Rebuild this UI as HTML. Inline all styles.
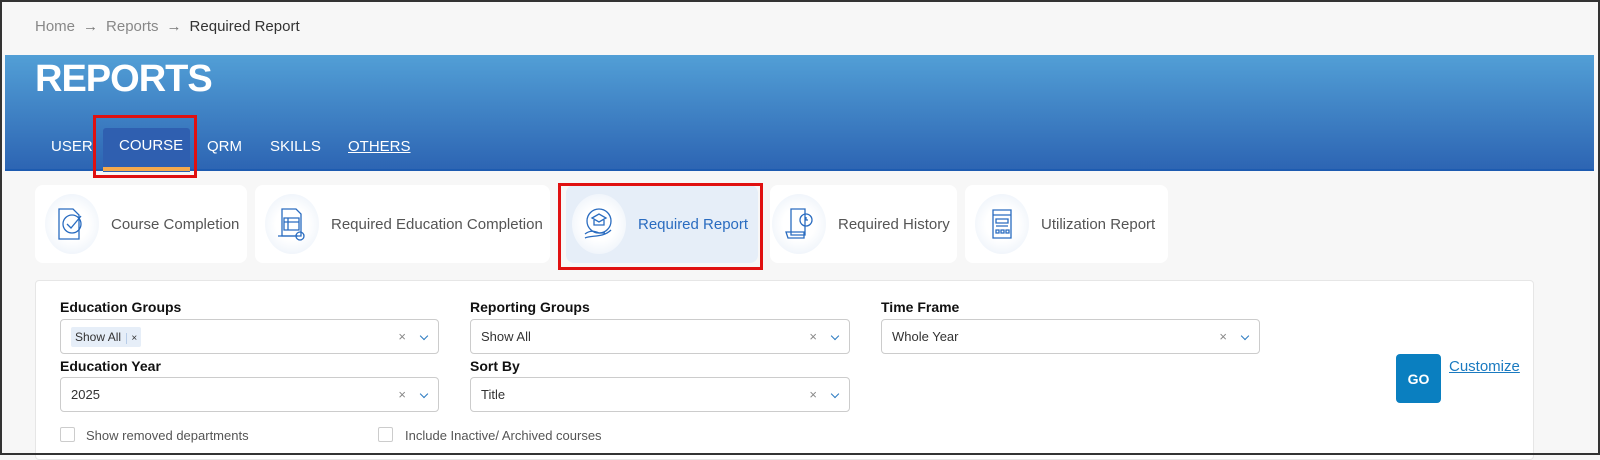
<!DOCTYPE html>
<html><head><meta charset="utf-8"><style>
*{box-sizing:border-box;margin:0;padding:0}
body{width:1600px;height:455px;overflow:hidden;background:#f7f7f7;font-family:"Liberation Sans",sans-serif;position:relative}
.frame{position:absolute;inset:0;border:2px solid #333;pointer-events:none;z-index:10}
.abs{position:absolute}
.bc{top:18px;left:35px;font-size:15px;color:#888}
.bc b{font-weight:normal;color:#333}
.bc i{font-style:normal;margin:0 8px;color:#777}
.banner{left:5px;top:55px;width:1589px;height:116px;background:linear-gradient(#529fd6,#2d65b3);border-bottom:2px solid #1d5bb0}
.title{left:35px;top:58px;color:#fff;font-size:38px;font-weight:bold;letter-spacing:-1px}
.tab{top:138px;color:#fff;font-size:15px}
.card{top:185px;height:78px;background:#fff;border-radius:8px;display:flex;align-items:center;font-size:15px;color:#555}
.ic{width:54px;height:60px;border-radius:50%;background:radial-gradient(circle,#fff 40%,#e6eef8);margin:0 12px 0 10px;display:flex;align-items:center;justify-content:center}
.panel{left:35px;top:280px;width:1499px;height:180px;background:#fff;border:1px solid #e6e6e6;border-radius:4px}
.lbl{font-size:14px;font-weight:bold;color:#111}
.sel{height:35px;border:1px solid #ccc;border-radius:4px;background:#fff;font-size:13px;color:#333;display:flex;align-items:center;padding-left:10px}
.sel .x{position:absolute;right:32px;color:#888;font-size:13px}
.sel .v{position:absolute;right:11px;top:13px;width:6px;height:6px;border-right:1.5px solid #2a7ac0;border-bottom:1.5px solid #2a7ac0;transform:rotate(45deg)}
.cb{width:15px;height:15px;border:1px solid #ccc;border-radius:2px}
.red{border:3px solid #e01010}
</style></head><body>
<div class="frame"></div>
<div class="abs bc">Home<i>→</i>Reports<i>→</i><b>Required Report</b></div>
<div class="abs banner"></div>
<div class="abs title">REPORTS</div>
<div class="abs" style="left:103px;top:128px;width:87px;height:44px;background:#2f5fb0;border-radius:3px 3px 0 0"></div>
<div class="abs" style="left:103px;top:167px;width:87px;height:4px;background:#f5a94b"></div>
<div class="abs red" style="left:93px;top:115px;width:104px;height:63px"></div>
<div class="abs tab" style="left:51px">USER</div>
<div class="abs tab" style="left:119px;top:137px">COURSE</div>
<div class="abs tab" style="left:207px">QRM</div>
<div class="abs tab" style="left:270px">SKILLS</div>
<div class="abs tab" style="left:348px;text-decoration:underline">OTHERS</div>

<div class="abs card" style="left:35px;width:212px"><div class="ic"><svg width="34" height="36" viewBox="0 0 34 36" fill="none" stroke="#2a6cc0" stroke-width="1.3"><path d="M4 3h14l6 6v24H4z"/><circle cx="17" cy="18" r="9"/><path d="M12 18l4 4 10-12"/></svg></div>Course Completion</div>
<div class="abs card" style="left:255px;width:295px"><div class="ic"><svg width="34" height="36" viewBox="0 0 34 36" fill="none" stroke="#2a6cc0" stroke-width="1.3"><path d="M7 3h14l5 5v22H7z"/><path d="M9 12h15v12H9zM9 16h15M13 12v12"/><path d="M3 30h20"/><circle cx="25" cy="30" r="4"/></svg></div>Required Education Completion</div>
<div class="abs card" style="left:566px;width:192px;background:#e6eef8;color:#2a6cc0"><div class="ic" style="margin-left:6px"><svg width="34" height="36" viewBox="0 0 34 36" fill="none" stroke="#2a6cc0" stroke-width="1.3"><circle cx="17" cy="15" r="12"/><path d="M10 12l7-4 7 4-7 4z M12 14v5h10v-5"/><path d="M3 28c5-4 10-3 14-1h6M3 32c6-3 18 0 26-8"/></svg></div>Required Report</div>
<div class="abs red" style="left:558px;top:183px;width:205px;height:87px"></div>
<div class="abs card" style="left:770px;width:187px"><div class="ic" style="margin-left:2px"><svg width="34" height="36" viewBox="0 0 34 36" fill="none" stroke="#2a6cc0" stroke-width="1.3"><path d="M9 3h14v26H9zM4 26h18v6H6z"/><circle cx="24" cy="14" r="6"/><path d="M24 11v3h2"/></svg></div>Required History</div>
<div class="abs card" style="left:965px;width:203px"><div class="ic"><svg width="34" height="36" viewBox="0 0 34 36" fill="none" stroke="#2a6cc0" stroke-width="1.3"><path d="M8 4h18v28H8zM8 9h18M11 13h12v4H11zM11 20h12M11 24h3v3h-3zM16 24h3v3h-3zM21 24h3v3h-3z"/></svg></div>Utilization Report</div>

<div class="abs panel"></div>
<div class="abs lbl" style="left:60px;top:299px">Education Groups</div>
<div class="abs lbl" style="left:470px;top:299px">Reporting Groups</div>
<div class="abs lbl" style="left:881px;top:299px">Time Frame</div>
<div class="abs sel" style="left:60px;top:319px;width:379px"><span style="background:#e6eef8;padding:3px 4px;font-size:12px;border-radius:2px">Show All <span style="border-left:1px solid #b8cde8;padding-left:4px;margin-left:2px;font-size:10px">×</span></span><span class="x">×</span><span class="v"></span></div>
<div class="abs sel" style="left:470px;top:319px;width:380px">Show All<span class="x">×</span><span class="v"></span></div>
<div class="abs sel" style="left:881px;top:319px;width:379px">Whole Year<span class="x">×</span><span class="v"></span></div>
<div class="abs lbl" style="left:60px;top:358px">Education Year</div>
<div class="abs lbl" style="left:470px;top:358px">Sort By</div>
<div class="abs sel" style="left:60px;top:377px;width:379px">2025<span class="x">×</span><span class="v"></span></div>
<div class="abs sel" style="left:470px;top:377px;width:380px">Title<span class="x">×</span><span class="v"></span></div>
<div class="abs cb" style="left:60px;top:427px"></div>
<div class="abs" style="left:86px;top:428px;font-size:13px;color:#555">Show removed departments</div>
<div class="abs cb" style="left:378px;top:427px"></div>
<div class="abs" style="left:405px;top:428px;font-size:13px;color:#555">Include Inactive/ Archived courses</div>
<div class="abs" style="left:1396px;top:354px;width:45px;height:49px;background:#0a7fc0;border-radius:4px;color:#fff;font-weight:bold;font-size:14px;display:flex;align-items:center;justify-content:center">GO</div>
<div class="abs" style="left:1449px;top:358px;font-size:15px;color:#1a7ac0;text-decoration:underline">Customize</div>
</body></html>
